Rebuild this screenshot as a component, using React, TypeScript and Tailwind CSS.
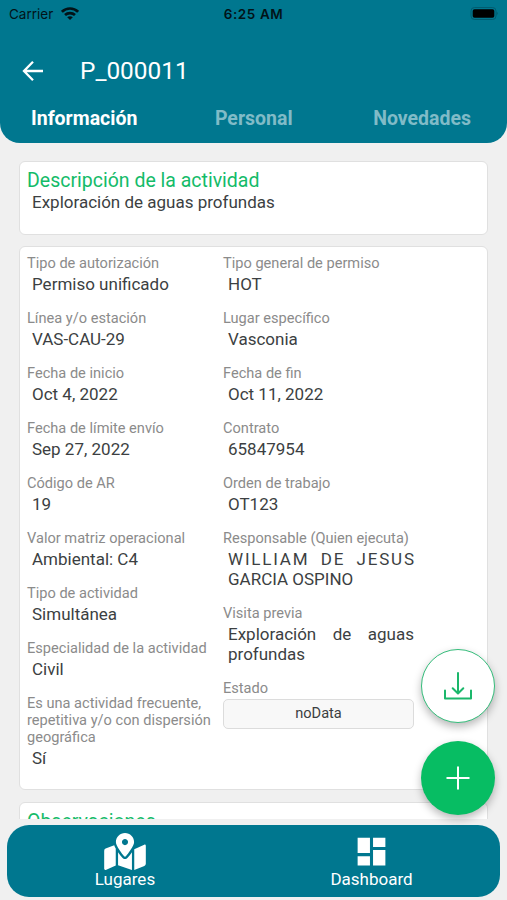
import { FaMapMarkedAlt } from 'react-icons/fa';
import { MdDashboard } from 'react-icons/md';

const LEFT = [
  { label: 'Tipo de autorización', value: 'Permiso unificado' },
  { label: 'Línea y/o estación', value: 'VAS-CAU-29' },
  { label: 'Fecha de inicio', value: 'Oct 4, 2022' },
  { label: 'Fecha de límite envío', value: 'Sep 27, 2022' },
  { label: 'Código de AR', value: '19' },
  { label: 'Valor matriz operacional', value: 'Ambiental: C4' },
  { label: 'Tipo de actividad', value: 'Simultánea' },
  { label: 'Especialidad de la actividad', value: 'Civil' },
  { label: 'Es una actividad frecuente, repetitiva y/o con dispersión geográfica', value: 'Sí' },
];

const RIGHT = [
  { label: 'Tipo general de permiso', value: 'HOT' },
  { label: 'Lugar específico', value: 'Vasconia' },
  { label: 'Fecha de fin', value: 'Oct 11, 2022' },
  { label: 'Contrato', value: '65847954' },
  { label: 'Orden de trabajo', value: 'OT123' },
];

function Label({ children }: any) {
  return <p className="text-[14.6px] leading-[17px] text-[#8b8b8b]">{children}</p>;
}

function Field({ label, value }: any) {
  return (
    <div className="mb-[16px]">
      <Label>{label}</Label>
      <p className="mt-[2px] pl-[5px] text-[17px] leading-5 text-[#3c3f42]">{value}</p>
    </div>
  );
}

function StatusBar() {
  return (
    <div className="grid h-7 grid-cols-3 items-center px-[9px] font-['Inter',sans-serif] text-[13.5px] text-[#021318]">
      <div className="flex items-center gap-[8px]">
        <span>Carrier</span>
        <svg width="18" height="13" viewBox="0 0 18 13" className="-mt-[2px]" fill="none" stroke="#021318" strokeWidth="2.7">
          <path d="M.9 4.8C5.4.4 12.6.4 17.1 4.8" />
          <path d="M4 8.1c2.8-2.6 7.2-2.6 10 0" />
          <path d="M9 13 6.2 10.2c1.5-1.4 4.1-1.4 5.6 0z" fill="#021318" stroke="none" />
        </svg>
      </div>
      <span className="text-center font-semibold tracking-[0.6px]">6:25 AM</span>
      <svg className="-mt-px justify-self-end" width="29" height="13" viewBox="0 0 29 13">
        <rect x="2" y=".5" width="25" height="12" rx="3.5" fill="none" stroke="#015568" strokeOpacity=".8" />
        <rect x="3.7" y="2.2" width="21.6" height="8.6" rx="1.8" fill="#000" />
        <path d="M27.8 4.8q1.4 1.7 0 3.4z" fill="#024b5b" />
      </svg>
    </div>
  );
}

export default function App() {
  return (
    <div className="relative flex h-[900px] w-[507px] flex-col overflow-hidden bg-[#f0f0f0] font-['Roboto',sans-serif]">
      <header className="h-[143px] shrink-0 rounded-b-[20px] bg-[#00778f] text-white">
        <StatusBar />
        <div className="flex h-[86px] items-center pl-[22px]">
          <svg width="22" height="22" viewBox="0 0 22 22" fill="none" stroke="white" strokeWidth="2.3">
            <path d="M21 11H2.5M11 1.8 2 11l9 9.2" />
          </svg>
          <h1 className="ml-[36px] text-[24.4px] leading-7">P_000011</h1>
        </div>
        <nav className="-mt-[7px] flex justify-between pl-[31px] pr-[36px] text-[19.5px] font-bold leading-[23px]">
          <span>Información</span>
          <span className="-ml-[3px] text-[#80bbc7]">Personal</span>
          <span className="text-[#80bbc7]">Novedades</span>
        </nav>
      </header>

      <main className="h-[676px] shrink-0 overflow-hidden px-[19px] pt-[18px]">
        <section className="h-[74px] rounded-[6px] border border-[#e0e0e0] bg-white px-[7px] pt-[7px]">
          <h2 className="text-[19.5px] leading-[23px] text-[#14bb69]">Descripción de la actividad</h2>
          <p className="pl-[5px] text-[17px] leading-5 text-[#3c3f42]">Exploración de aguas profundas</p>
        </section>

        <section className="mt-[11px] flex h-[544px] rounded-[6px] border border-[#e0e0e0] bg-white px-[7px] pt-[8px]">
          <div className="w-[196px] pr-2">
            {LEFT.map(f => <Field key={f.label} {...f} />)}
          </div>
          <div className="w-[191px]">
            {RIGHT.map(f => <Field key={f.label} {...f} />)}
            <Label>Responsable (Quien ejecuta)</Label>
            <div className="mb-[16px] mt-[2px] pl-[5px] text-[17px] leading-5 text-[#3c3f42]">
              <p className="flex justify-between tracking-[1.8px]">
                <span>WILLIAM</span><span>DE</span><span className="-mr-[1.8px]">JESUS</span>
              </p>
              <p>GARCIA OSPINO</p>
            </div>
            <Label>Visita previa</Label>
            <p className="mb-[16px] mt-[2px] pl-[5px] text-justify text-[17px] leading-5 text-[#3c3f42]">
              Exploración de aguas profundas
            </p>
            <Label>Estado</Label>
            <div className="mt-[2px] flex h-[30px] items-center justify-center rounded-[5px] border border-[#dcdcdc] bg-[#f8f8f8] text-[14.6px] text-[#3c3f42]">
              noData
            </div>
          </div>
        </section>

        <section className="mt-[12px] h-[74px] rounded-[6px] border border-[#e0e0e0] bg-white px-[7px] pt-[7px]">
          <h2 className="text-[19.5px] leading-[23px] text-[#14bb69]">Observaciones</h2>
        </section>
      </main>

      <footer className="mx-[7px] mt-[6px] flex h-[72px] shrink-0 rounded-[22px] bg-[#00778f] text-[17px] leading-5 text-white">
        <div className="flex w-[236px] flex-col items-center pt-[8px]">
          <FaMapMarkedAlt className="h-[37px] w-[42px]" />
          <span className="-mt-px">Lugares</span>
        </div>
        <div className="flex flex-1 flex-col items-center pt-[8px]">
          <MdDashboard size={37} />
          <span className="-mt-px">Dashboard</span>
        </div>
      </footer>

      {/* floating actions */}
      <div className="absolute left-[421px] top-[649px] flex flex-col gap-[18px]">
        <button className="flex size-[74px] items-center justify-center rounded-full border-[1.5px] border-[#35bd7b] bg-white shadow-[0_4px_9px_rgba(0,0,0,0.28)]">
          <svg width="28" height="28" viewBox="0 0 28 28" fill="none" stroke="#1bb76b" strokeWidth="2" strokeLinecap="round" strokeLinejoin="round">
            <path d="M14 1v20M8.7 16.3 14 21.5l5.3-5.2M1 18.5v8h26v-8" />
          </svg>
        </button>
        <button className="flex size-[74px] items-center justify-center rounded-full bg-[#07bd63] shadow-[0_4px_9px_rgba(0,0,0,0.28)]">
          <svg width="24" height="24" viewBox="0 0 24 24" stroke="white" strokeWidth="2">
            <path d="M12 .5v23M.5 12h23" />
          </svg>
        </button>
      </div>
    </div>
  );
}
